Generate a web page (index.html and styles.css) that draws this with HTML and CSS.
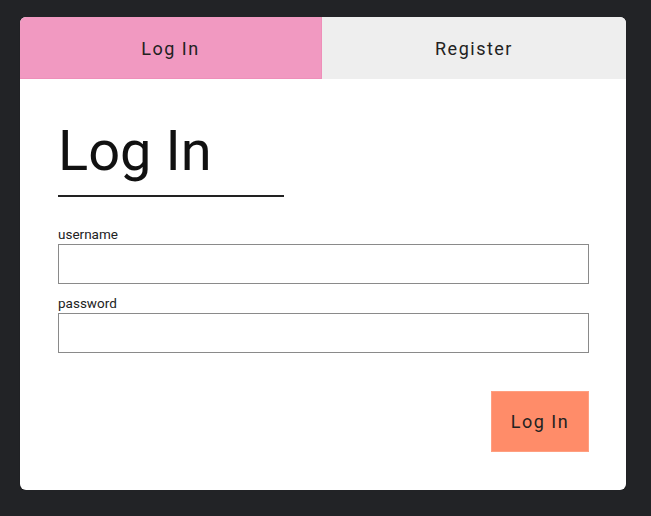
FILE: index.html
```html
<!DOCTYPE html>
<html>
<head>
<meta charset="utf-8">
<link rel="stylesheet" href="styles.css">
</head>
<body>
<div class="card">
  <div class="tabs">
    <div class="tab tab-active">Log In</div>
    <div class="tab">Register</div>
  </div>
  <div class="content">
    <h1 class="title">Log In</h1>
    <div class="rule"></div>
    <label class="label">username</label>
    <input class="field" type="text">
    <label class="label label-2">password</label>
    <input class="field" type="password">
    <div class="actions">
      <button class="btn">Log In</button>
    </div>
  </div>
</div>
</body>
</html>
```

FILE: styles.css
```css
html, body {
  margin: 0;
  padding: 0;
  background: #222326;
  font-family: Roboto, "Liberation Sans", sans-serif;
}
body {
  padding: 17px 25px 0 20px;
}
.card {
  width: 606px;
  height: 473px;
  background: #fff;
  border-radius: 6px;
  overflow: hidden;
  box-shadow: 0 1px 1px rgba(0,0,0,0.5);
}
.tabs {
  display: flex;
  height: 62px;
}
.tab {
  flex: 1;
  display: flex;
  align-items: center;
  justify-content: center;
  padding-top: 1px;
  box-sizing: border-box;
  font-size: 18px;
  letter-spacing: 1.5px;
  color: #222;
  background: #eeeeee;
}
.tab-active {
  background: #f199c1;
  border-bottom: 1px solid #ee8fb9;
  border-right: 1px solid #ee8fb9;
  flex: 0 0 302px;
}
.content {
  padding: 32px 37px 0 38px;
  display: flex;
  flex-direction: column;
}
.title {
  margin: 0;
  font-weight: 400;
  font-size: 56px;
  line-height: 80px;
  color: #111;
}
.rule {
  width: 226px;
  height: 2px;
  background: #222;
  margin-top: 4px;
  margin-bottom: 29px;
}
.label {
  font-size: 13.5px;
  color: #222;
  line-height: 16px;
  margin-bottom: 2px;
}
.label-2 {
  margin-top: 11px;
}
.field {
  box-sizing: border-box;
  width: 531px;
  height: 40px;
  border: 1px solid #8a8a8a;
  margin: 0;
  padding: 0 8px;
  font: inherit;
}
.actions {
  display: flex;
  justify-content: flex-end;
  margin-top: 38px;
}
.btn {
  width: 98px;
  height: 61px;
  background: #ff8c69;
  border: 1px solid #ff9f80;
  font-family: Roboto, "Liberation Sans", sans-serif;
  font-size: 18px;
  letter-spacing: 1.5px;
  color: #222;
  padding: 0;
}
```
